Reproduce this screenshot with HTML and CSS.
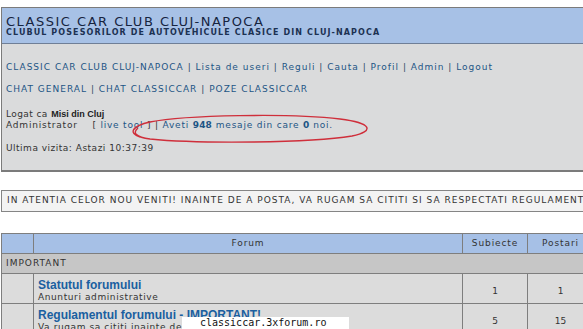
FILE: index.html
```html
<!DOCTYPE html>
<html lang="ro">
<head>
    <meta charset="UTF-8">
    <title>Classic Car Club Cluj-Napoca</title>
    <link rel="stylesheet" href="styles.css">
</head>
<body>
    <div class="head">
        <div class="head-top">
            <h1 class="title">CLASSIC CAR CLUB CLUJ-NAPOCA</h1>
            <div class="subtitle">CLUBUL POSESORILOR DE AUTOVEHICULE CLASICE DIN CLUJ-NAPOCA</div>
        </div>
        <div class="head-body">
            <p class="nav">
                <a href="#">CLASSIC CAR CLUB CLUJ-NAPOCA</a> | <a href="#">Lista de useri</a> | <a href="#">Reguli</a> | <a href="#">Cauta</a> | <a href="#">Profil</a> | <a href="#">Admin</a> | <a href="#">Logout</a>
            </p>
            <p class="nav">
                <a href="#">CHAT GENERAL</a> | <a href="#">CHAT CLASSICCAR</a> | <a href="#">POZE CLASSICCAR</a>
            </p>
            <p class="user">
                <span class="soft">Logat ca</span> <b class="name">Misi din Cluj</b><br>
                Administrator &nbsp;&nbsp; [ <a href="#">live tool</a> ] | <a href="#">Aveti <b>948</b> mesaje din care <b>0</b> noi.</a>
            </p>
            <p class="last">Ultima vizita: Astazi 10:37:39</p>
        </div>
    </div>

    <div class="notice">IN ATENTIA CELOR NOU VENITI! INAINTE DE A POSTA, VA RUGAM SA CITITI SI SA RESPECTATI REGULAMENTUL</div>

    <table class="forums">
        <tr>
            <th class="c-icon"></th>
            <th class="c-forum">Forum</th>
            <th class="c-num">Subiecte</th>
            <th class="c-num2">Postari</th>
        </tr>
        <tr>
            <td class="cat" colspan="4">IMPORTANT</td>
        </tr>
        <tr>
            <td class="icon"></td>
            <td class="forum">
                <a class="forum-name" href="#">Statutul forumului</a>
                <div class="forum-desc">Anunturi administrative</div>
            </td>
            <td class="num">1</td>
            <td class="num">1</td>
        </tr>
        <tr>
            <td class="icon"></td>
            <td class="forum">
                <a class="forum-name" href="#">Regulamentul forumului - IMPORTANT!</a>
                <div class="forum-desc">Va rugam sa cititi inainte de a posta</div>
            </td>
            <td class="num">5</td>
            <td class="num">15</td>
        </tr>
    </table>

    <!-- red mark drawn over the screenshot -->
    <svg class="mark" width="583" height="329" viewBox="0 0 583 329">
        <path d="M140,137 C128,133 132,126 150,122 C185,115 290,113 340,119 C372,123 375,131 352,136 C310,143 200,144 150,139 C136,137 132,133 138,128" fill="none" stroke="#cf2f3b" stroke-width="1.4"/>
    </svg>

    <div class="watermark">classiccar.3xforum.ro</div>
</body>
</html>
```

FILE: styles.css
```css
* {
    margin: 0;
    padding: 0;
    box-sizing: border-box;
}

html, body {
    overflow: hidden;
}

body {
    font-family: "DejaVu Sans", Verdana, sans-serif;
    font-size: 9px;
    line-height: 11px;
    color: #333;
    background-color: #fff;
    padding: 7px 0 0 1px;
    width: 700px;
    height: 329px;
}

a {
    color: #1d5585;
    text-decoration: none;
}

/* header box */
.head {
    border: 1px solid #7b7b7b;
    border-right: none;
}

.head-top {
    height: 36px;
    padding: 7px 4px 0;
    background-color: #a7c1e6;
    border-bottom: 1px solid #6f7f97;
}

.title {
    font-size: 13px;
    font-weight: normal;
    line-height: 13px;
    letter-spacing: 1.5px;
    color: #16243f;
}

.subtitle {
    font-size: 8px;
    font-weight: bold;
    line-height: 10px;
    letter-spacing: 1.1px;
    color: #1c3152;
}

.head-body {
    height: 127px;
    padding: 18px 4px 0;
    background-color: #dadbdc;
    border-bottom: 1px solid #7b7b7b;
}

.nav {
    letter-spacing: 1px;
    color: #2f4a66;
    margin-bottom: 11px;
}

.user {
    margin-top: 14px;
    letter-spacing: 0.8px;
}

.user .soft {
    letter-spacing: 0.4px;
}

.user .name {
    font-family: "Liberation Sans", Arial, sans-serif;
    font-size: 9px;
    letter-spacing: 0;
    color: #222;
}

.user a b {
    letter-spacing: 0.2px;
}

.last {
    margin-top: 12px;
    letter-spacing: 0.5px;
}

/* notice */
.notice {
    margin-top: 18px;
    height: 22px;
    padding: 4px 5px 0;
    background-color: #f3f3f3;
    border: 1px solid #858585;
    border-right: none;
    letter-spacing: 1px;
    color: #333;
    white-space: nowrap;
}

/* forum table */
.forums {
    margin-top: 21px;
    width: 593px;
    table-layout: fixed;
    border-collapse: separate;
    border-spacing: 0;
    border-top: 1px solid #7e7e7e;
    border-left: 1px solid #7e7e7e;
}

.forums th,
.forums td {
    border-right: 1px solid #7e7e7e;
    border-bottom: 1px solid #7e7e7e;
    vertical-align: middle;
}

.forums th {
    height: 20px;
    font-weight: normal;
    letter-spacing: 0.9px;
    color: #333;
    background-color: #a6c0e6;
    text-align: center;
}

.c-icon { width: 32px; }
.c-forum { width: 429px; }
.c-num { width: 65px; }
.c-num2 { width: 66px; }

.cat {
    height: 20px;
    padding-left: 4px;
    letter-spacing: 1px;
    background-color: #c6c6c6;
}

.icon,
.forum,
.num {
    background-color: #dcdcdc;
}

.forum {
    padding: 5px 4px 0;
    vertical-align: top;
}

.forum-name {
    display: block;
    font-family: "Liberation Sans", Arial, sans-serif;
    font-size: 12px;
    font-weight: bold;
    line-height: 13px;
    color: #1a5fa0;
    white-space: nowrap;
}

.forum-desc {
    letter-spacing: 0.6px;
    white-space: nowrap;
}

.num {
    padding-top: 6px;
    text-align: center;
}

/* overlays */
.mark {
    position: absolute;
    top: 0;
    left: 0;
    pointer-events: none;
}

.watermark {
    position: absolute;
    left: 182px;
    top: 317px;
    width: 167px;
    height: 14px;
    padding-left: 18px;
    background-color: #fff;
    font-family: "DejaVu Sans Mono", "Liberation Mono", monospace;
    font-size: 10px;
    line-height: 12px;
    color: #111;
}
```
